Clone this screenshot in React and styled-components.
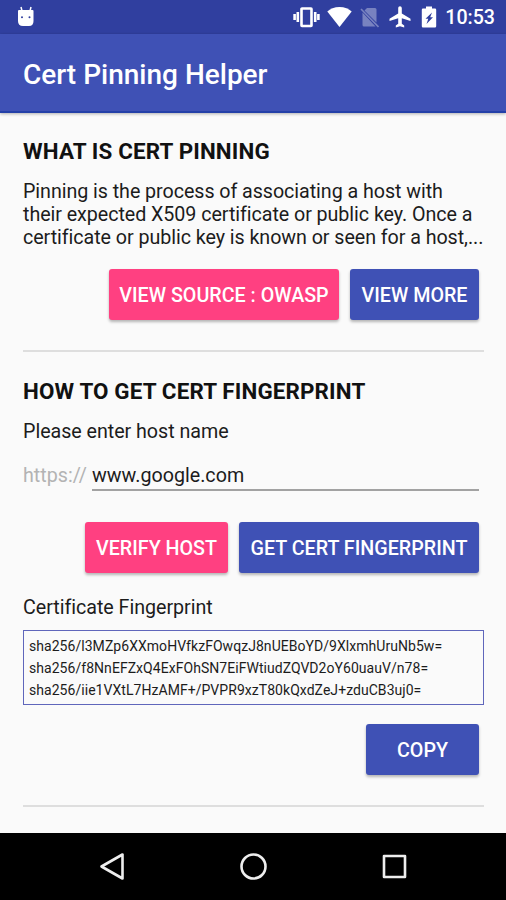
import React from "react";
import styled, { createGlobalStyle, ThemeProvider } from "styled-components";

const theme = {
  primary: "#3f51b5",
  primaryDark: "#303f9f",
  accent: "#ff4081",
  background: "#fafafa",
  text: "#1c1c1c",
  hint: "#b3b3b3",
  divider: "#dedede"
};

const GlobalStyle = createGlobalStyle`
  * {
    box-sizing: border-box;
  }

  body {
    margin: 0;
    background: ${theme.background};
    font-family: Roboto, sans-serif;
    color: ${theme.text};
  }
`;

const Screen = styled.div`
  display: flex;
  flex-direction: column;
  width: 506px;
  height: 900px;
  overflow: hidden;
  background: ${props => props.theme.background};
`;

const StatusBar = styled.header`
  display: flex;
  align-items: center;
  flex: none;
  height: 34px;
  padding: 0 11px 0 17px;
  background: ${props => props.theme.primaryDark};
  color: #fff;
`;

const StatusIcons = styled.div`
  display: flex;
  align-items: center;
  margin-left: auto;
`;

const StatusIcon = styled.svg`
  display: block;
  flex: none;
  width: ${props => props.$width}px;
  height: ${props => props.$height || 24}px;
  margin-right: ${props => props.$gap || 0}px;
  fill: #fff;
  opacity: ${props => (props.$faded ? 0.35 : 1)};
`;

const Clock = styled.span`
  font-size: 19.6px;
  font-weight: 500;
  line-height: 34px;
  padding-top: 2px;
`;

const AppBar = styled.div`
  display: flex;
  align-items: center;
  flex: none;
  height: 79px;
  padding: 5px 23px 0;
  background: ${props => props.theme.primary};
  border-bottom: 2px solid #2440a8;
  box-shadow: 0 1px 3px rgba(0, 0, 0, 0.3);
`;

const Title = styled.h1`
  margin: 0;
  font-size: 28px;
  font-weight: 500;
  line-height: 36px;
  color: #fff;
`;

const Content = styled.main`
  flex: 1;
  padding: 23px 22px 0 23px;
`;

const Section = styled.section`
  & + & {
    margin-top: 24px;
  }
`;

const Heading = styled.h2`
  margin: 0;
  font-size: 22.4px;
  font-weight: 700;
  letter-spacing: 0.14px;
  line-height: 30px;
  color: #111;
`;

const Description = styled.p`
  margin: 15px 0 0;
  font-size: 19.7px;
  letter-spacing: -0.06px;
  line-height: 22.8px;
  white-space: nowrap;
`;

const Label = styled.label`
  display: block;
  margin-top: ${props => props.$top}px;
  font-size: 19.7px;
  letter-spacing: -0.04px;
  line-height: 24px;
`;

const ButtonRow = styled.div`
  display: flex;
  justify-content: flex-end;
  gap: 11px;
  margin-top: ${props => props.$top}px;
  padding-right: 5px;
`;

const Button = styled.button`
  width: ${props => props.$width}px;
  height: 51px;
  padding: 2px 0 0;
  border: 0;
  border-radius: 3px;
  background: ${props => (props.$accent ? props.theme.accent : props.theme.primary)};
  box-shadow: 0 2px 3px rgba(0, 0, 0, 0.28);
  color: #fff;
  font-family: inherit;
  font-size: 19.7px;
  font-weight: 500;
  text-transform: uppercase;
  white-space: nowrap;
`;

const Divider = styled.hr`
  height: 2px;
  margin: 30px 0 0;
  border: 0;
  background: ${props => props.theme.divider};
`;

const HostField = styled.div`
  display: flex;
  gap: 6px;
  margin-top: 18px;
  padding-right: 5px;
`;

const Protocol = styled.span`
  width: 63px;
  color: ${props => props.theme.hint};
  font-size: 19.7px;
  line-height: 28px;
`;

const HostInput = styled.input`
  flex: 1;
  min-width: 0;
  height: 29px;
  padding: 0;
  border: 0;
  border-bottom: 2px solid #a2a2a2;
  background: none;
  color: inherit;
  font-family: inherit;
  font-size: 19.7px;
  line-height: 27px;
  outline: none;
`;

const FingerprintBox = styled.div`
  height: 75px;
  margin-top: 10px;
  padding: 4px 5px;
  border: 1px solid #5f66bb;
  font-size: 14px;
  letter-spacing: 0.045px;
  line-height: 22px;
  white-space: nowrap;
`;

const NavBar = styled.nav`
  display: flex;
  align-items: center;
  justify-content: center;
  gap: 112px;
  flex: none;
  height: 67px;
  background: #000;
`;

const NavIcon = styled.svg`
  display: block;
  width: 29px;
  height: 29px;
  fill: none;
  stroke: #eee;
  stroke-width: 2.6;
  stroke-linejoin: round;
`;

const fingerprints = [
  "sha256/l3MZp6XXmoHVfkzFOwqzJ8nUEBoYD/9XlxmhUruNb5w=",
  "sha256/f8NnEFZxQ4ExFOhSN7EiFWtiudZQVD2oY60uauV/n78=",
  "sha256/iie1VXtL7HzAMF+/PVPR9xzT80kQxdZeJ+zduCB3uj0="
];

const App = () => (
  <ThemeProvider theme={theme}>
    <GlobalStyle />
    <Screen>
      <StatusBar>
        <StatusIcon $width={18} $height={22} viewBox="0 0 18 22">
          <path d="M4 1 5 5M14 1 13 5" stroke="#fff" strokeWidth="1.5" />
          <path
            fillRule="evenodd"
            d="M2 4H15.500Q16.500 4 16.500 5V15Q16.500 20 12 20H6Q1 20 1 15V5Q1 4 2 4ZM5 10.2a1 1 0 1 0 0 2 1 1 0 0 0 0-2ZM12.500 10.2a1 1 0 1 0 0 2 1 1 0 0 0 0-2Z"
          />
        </StatusIcon>
        <StatusIcons>
          <StatusIcon $width={27} $gap={7} viewBox="0 0 27 24">
            <path d="M1.600 9V15M4.800 7V17M22.200 7V17M25.400 9V15" stroke="#fff" strokeWidth="2.600" />
            <rect x="8.500" y="3.500" width="10" height="17.500" rx="0.500" fill="none" stroke="#fff" strokeWidth="2.600" />
          </StatusIcon>
          <StatusIcon $width={25} $gap={8} viewBox="0 0 25 24">
            <path d="M12.500 22 0.300 6.500C3 4 7.500 2 12.500 2S22 4 24.700 6.500Z" />
          </StatusIcon>
          <StatusIcon $width={19} $gap={10} $faded viewBox="0 0 19 24">
            <path d="M7 3H15Q16.500 3 16.500 4.500V17.500L4.500 5.500ZM2.500 7.500 15.500 21.500H4Q2.500 21.500 2.500 20Z" />
            <path d="M1 4 18.500 22" stroke="#fff" strokeWidth="1.600" />
          </StatusIcon>
          <StatusIcon $width={22} $gap={10} viewBox="0 0 22 24">
            <path d="M21.500 16v-2.200l-8.700-5.400V3.200C12.800 2 12 1.200 11 1.200S9.200 2 9.200 3.200V8.400L0.500 13.800V16l8.700-2.700v5.500l-2.400 1.700v1.900L11 21.200l4.200 1.200v-1.900l-2.400-1.700v-5.500Z" />
          </StatusIcon>
          <StatusIcon $width={16} $gap={8} viewBox="0 0 16 24">
            <path
              fillRule="evenodd"
              d="M2 3.500H5V1.500H11V3.500H14Q15.200 3.500 15.200 4.700V21.300Q15.200 22.500 14 22.500H2Q0.800 22.500 0.800 21.300V4.700Q0.800 3.500 2 3.500ZM11 7.500 4.500 13.800H7.300L5.500 19 12 12.200H9.200Z"
            />
          </StatusIcon>
          <Clock>10:53</Clock>
        </StatusIcons>
      </StatusBar>

      <AppBar>
        <Title>Cert Pinning Helper</Title>
      </AppBar>

      <Content>
        <Section>
          <Heading>WHAT IS CERT PINNING</Heading>
          <Description>
            Pinning is the process of associating a host with
            <br />
            their expected X509 certificate or public key. Once a
            <br />
            certificate or public key is known or seen for a host,...
          </Description>
          <ButtonRow $top={20}>
            <Button $accent $width={230}>View source : OWASP</Button>
            <Button $width={129}>View more</Button>
          </ButtonRow>
          <Divider />
        </Section>

        <Section>
          <Heading>HOW TO GET CERT FINGERPRINT</Heading>
          <Label $top={14} htmlFor="host">Please enter host name</Label>
          <HostField>
            <Protocol>https://</Protocol>
            <HostInput id="host" defaultValue="www.google.com" />
          </HostField>
          <ButtonRow $top={31}>
            <Button $accent $width={143}>Verify host</Button>
            <Button $width={240}>Get cert fingerprint</Button>
          </ButtonRow>

          <Label as="div" $top={23}>Certificate Fingerprint</Label>
          <FingerprintBox>
            {fingerprints.map(item => (
              <div key={item}>{item}</div>
            ))}
          </FingerprintBox>
          <ButtonRow $top={19}>
            <Button $width={113}>Copy</Button>
          </ButtonRow>
          <Divider />
        </Section>
      </Content>

      <NavBar>
        <NavIcon viewBox="0 0 29 29">
          <path d="M24.500 2.500V26.500L3.500 14.500Z" />
        </NavIcon>
        <NavIcon viewBox="0 0 29 29">
          <circle cx="14.500" cy="14.500" r="12" />
        </NavIcon>
        <NavIcon viewBox="0 0 29 29">
          <rect x="4" y="4" width="21" height="21" />
        </NavIcon>
      </NavBar>
    </Screen>
  </ThemeProvider>
);

export default App;
